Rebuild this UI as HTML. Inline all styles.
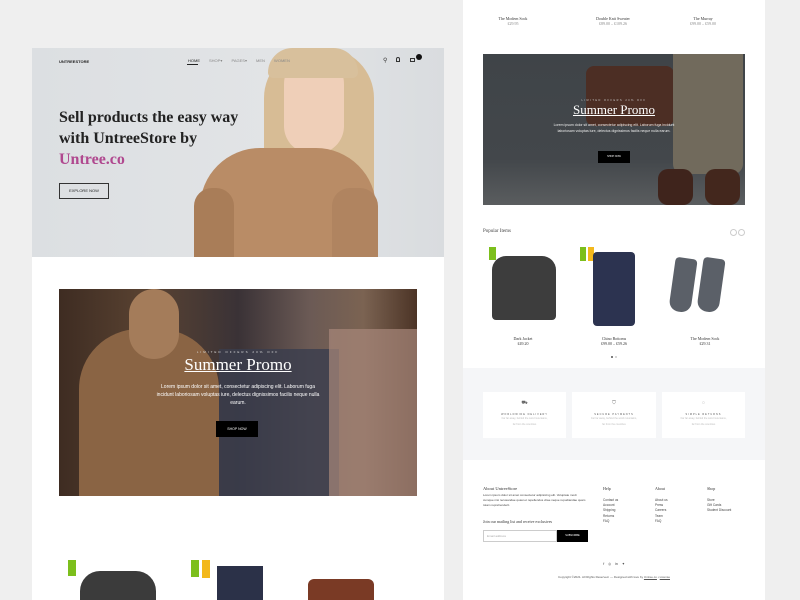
<!DOCTYPE html>
<html><head><meta charset="utf-8"><style>
*{margin:0;padding:0;box-sizing:border-box}
body{width:800px;height:600px;background:#efefef;position:relative;overflow:hidden;font-family:"Liberation Sans",sans-serif}
.a{position:absolute}
.serif{font-family:"Liberation Serif",serif}
.t{font-size:4px;color:#333}
</style></head><body>
<!-- LEFT PANEL -->
<div class="a" style="left:32px;top:48px;width:412px;height:552px;background:#fff"></div>
<div class="a" style="left:32px;top:48px;width:412px;height:209px;background:linear-gradient(90deg,#dcdfe2,#e2e4e6 60%,#d9dcdf);overflow:hidden">
  <!-- woman -->
  <div class="a" style="left:232px;top:0;width:110px;height:180px;border-radius:50px 50px 20px 20px;background:#d7bc95"></div>
  <div class="a" style="left:252px;top:6px;width:60px;height:100px;border-radius:30px 30px 28px 28px;background:#efcfb8"></div>
  <div class="a" style="left:236px;top:0;width:90px;height:30px;border-radius:45px 45px 10px 10px;background:#d8c09c"></div>
  <div class="a" style="left:168px;top:100px;width:176px;height:130px;border-radius:60px 60px 0 0;background:#b98c66"></div>
  <div class="a" style="left:162px;top:140px;width:40px;height:90px;border-radius:18px;background:#a97d58"></div>
  <div class="a" style="left:300px;top:140px;width:46px;height:90px;border-radius:18px;background:#b08460"></div>
</div>
<div class="a" style="left:59px;top:59px;font-size:4px;font-weight:bold;color:#222">UNTREESTORE</div>
<div class="a" style="left:188px;top:58px;font-size:4px;color:#222">HOME</div>
<div class="a" style="left:187px;top:64px;width:11px;height:1px;background:#222"></div>
<div class="a" style="left:209px;top:58px;font-size:4px;color:#888;word-spacing:8px">SHOP▾ PAGES▾ MEN WOMEN</div>
<div class="a" style="left:383px;top:57px;font-size:6px;color:#333">⚲</div>
<div class="a" style="left:396px;top:57px;width:4px;height:5px;border:1px solid #333;border-radius:2px 2px 0 0"></div>
<div class="a" style="left:410px;top:58px;width:5px;height:4px;border:1px solid #333"></div>
<div class="a" style="left:416px;top:54px;width:6px;height:6px;border-radius:50%;background:#111"></div>
<div class="a serif" style="left:59px;top:107px;font-size:16px;line-height:21px;font-weight:bold;color:#222">Sell products the easy way<br>with UntreeStore by<br><span style="color:#b0488f">Untree.co</span></div>
<div class="a" style="left:59px;top:183px;width:50px;height:16px;border:1px solid #333;font-size:4px;line-height:14px;text-align:center;color:#222">EXPLORE NOW</div>
<!-- promo left -->
<div class="a" style="left:59px;top:289px;width:358px;height:207px;overflow:hidden;background:linear-gradient(90deg,#3e2c22 0%,#5a4332 25%,#3a3236 50%,#6b5a55 70%,#7b6352 85%,#4c3426 100%)">
  <div class="a" style="left:20px;top:40px;width:140px;height:170px;border-radius:60px 60px 0 0;background:#8a6444"></div>
  <div class="a" style="left:70px;top:0;width:50px;height:70px;border-radius:25px;background:#a47c5a"></div>
  <div class="a" style="left:160px;top:60px;width:120px;height:150px;background:#3a3d4e;opacity:.8"></div>
  <div class="a" style="left:270px;top:40px;width:88px;height:170px;background:#a8887a;opacity:.7"></div>
</div>
<div class="a" style="left:59px;top:350px;width:358px;text-align:center;font-size:3px;letter-spacing:2px;color:#ddd">LIMITED OFFERS 20% OFF</div>
<div class="a serif" style="left:59px;top:355px;width:358px;text-align:center;font-size:17px;color:#fff;text-decoration:underline">Summer Promo</div>
<div class="a" style="left:155px;top:383px;width:166px;text-align:center;font-size:5px;line-height:8px;color:#fff">Lorem ipsum dolor sit amet, consectetur adipiscing elit. Laborum fuga incidunt laboriosam voluptas iure, delectus dignissimos facilis neque nulla earum.</div>
<div class="a" style="left:216px;top:421px;width:42px;height:16px;background:#000;color:#fff;font-size:3.5px;line-height:16px;text-align:center">SHOP NOW</div>
<!-- bottom products left -->
<div class="a" style="left:68px;top:560px;width:8px;height:16px;background:#7cbf1c"></div>
<div class="a" style="left:191px;top:560px;width:8px;height:17px;background:#7cbf1c"></div>
<div class="a" style="left:202px;top:560px;width:8px;height:18px;background:#f3b81c"></div>
<div class="a" style="left:80px;top:571px;width:76px;height:29px;border-radius:20px 20px 0 0;background:#3b3b3b"></div>
<div class="a" style="left:217px;top:566px;width:46px;height:34px;background:#2b3148"></div>
<div class="a" style="left:308px;top:579px;width:66px;height:21px;border-radius:6px 6px 0 0;background:#7a3a25"></div>
<!-- RIGHT PANEL -->
<div class="a" style="left:463px;top:0;width:302px;height:600px;background:#fff"></div>
<div class="a serif t" style="left:463px;top:16px;width:100px;text-align:center">The Modern Sock<br><span style="color:#888">£29.95</span></div>
<div class="a serif t" style="left:563px;top:16px;width:100px;text-align:center">Double Knit Sweater<br><span style="color:#888">£89.00 – £109.26</span></div>
<div class="a serif t" style="left:653px;top:16px;width:100px;text-align:center">The Murray<br><span style="color:#888">£99.00 – £59.00</span></div>
<div class="a" style="left:483px;top:54px;width:262px;height:151px;overflow:hidden;background:linear-gradient(180deg,#3f4448 0%,#43474b 70%,#5a5d5f 100%)">
  <div class="a" style="left:103px;top:12px;width:88px;height:60px;border-radius:8px;background:#4c2e24"></div>
  <div class="a" style="left:190px;top:0;width:70px;height:120px;background:#716a5c;border-radius:0 0 10px 10px"></div>
  <div class="a" style="left:175px;top:115px;width:35px;height:36px;background:#3f241c;border-radius:10px"></div>
  <div class="a" style="left:222px;top:115px;width:35px;height:36px;background:#43271d;border-radius:10px"></div>
</div>
<div class="a" style="left:483px;top:99px;width:262px;text-align:center;font-size:2.5px;letter-spacing:1.5px;color:#ccc">LIMITED OFFERS 20% OFF</div>
<div class="a serif" style="left:483px;top:102px;width:262px;text-align:center;font-size:13px;color:#fff;text-decoration:underline">Summer Promo</div>
<div class="a" style="left:553px;top:123px;width:122px;text-align:center;font-size:3.5px;line-height:5.5px;color:#eee">Lorem ipsum dolor sit amet, consectetur adipiscing elit. Laborum fuga incidunt laboriosam voluptas iure, delectus dignissimos facilis neque nulla earum.</div>
<div class="a" style="left:598px;top:151px;width:32px;height:12px;background:#000;color:#fff;font-size:2.5px;line-height:12px;text-align:center">SHOP NOW</div>
<div class="a serif" style="left:483px;top:229px;font-size:5px;color:#444">Popular Items</div>
<div class="a" style="left:730px;top:229px;width:7px;height:7px;border:1px solid #ccc;border-radius:50%"></div>
<div class="a" style="left:738px;top:229px;width:7px;height:7px;border:1px solid #ccc;border-radius:50%"></div>
<div class="a" style="left:489px;top:247px;width:7px;height:13px;background:#7cbf1c"></div>
<div class="a" style="left:580px;top:247px;width:6px;height:14px;background:#7cbf1c"></div>
<div class="a" style="left:588px;top:247px;width:6px;height:14px;background:#f3b81c"></div>
<div class="a" style="left:492px;top:256px;width:64px;height:64px;border-radius:14px 14px 4px 4px;background:#3d3d3d"></div>
<div class="a" style="left:593px;top:252px;width:42px;height:74px;border-radius:4px;background:#2c3350"></div>
<div class="a" style="left:672px;top:258px;width:22px;height:54px;border-radius:4px 4px 10px 10px;background:#5b6068;transform:rotate(8deg)"></div>
<div class="a" style="left:700px;top:258px;width:22px;height:54px;border-radius:4px 4px 10px 10px;background:#5b6068;transform:rotate(8deg)"></div>
<div class="a serif t" style="left:473px;top:336px;width:100px;text-align:center">Dark Jacket<br>£49.20</div>
<div class="a serif t" style="left:564px;top:336px;width:100px;text-align:center">Chino Bottoms<br>£99.00 – £59.26</div>
<div class="a serif t" style="left:655px;top:336px;width:100px;text-align:center">The Modern Sock<br>£29.31</div>
<div class="a" style="left:611px;top:356px;width:2px;height:2px;border-radius:50%;background:#555"></div>
<div class="a" style="left:615px;top:356px;width:2px;height:2px;border-radius:50%;background:#ccc"></div>
<!-- features -->
<div class="a" style="left:463px;top:368px;width:302px;height:92px;background:#f5f6f8"></div>
<div class="a" style="left:483px;top:392px;width:83px;height:46px;background:#fff"></div>
<div class="a" style="left:572px;top:392px;width:84px;height:46px;background:#fff"></div>
<div class="a" style="left:662px;top:392px;width:83px;height:46px;background:#fff"></div>
<div class="a" style="left:483px;top:400px;width:83px;text-align:center;font-size:5px;color:#666">⛟</div>
<div class="a" style="left:572px;top:400px;width:84px;text-align:center;font-size:5px;color:#666">⛉</div>
<div class="a" style="left:662px;top:400px;width:83px;text-align:center;font-size:5px;color:#666">◌</div>
<div class="a" style="left:483px;top:413px;width:83px;text-align:center;font-size:2.5px;letter-spacing:1px;color:#555">WORLDWIDE DELIVERY<br><span style="color:#bbb;letter-spacing:0;line-height:6px">Far far away, behind the word mountains,<br>far from the countries</span></div>
<div class="a" style="left:572px;top:413px;width:84px;text-align:center;font-size:2.5px;letter-spacing:1px;color:#555">SECURE PAYMENTS<br><span style="color:#bbb;letter-spacing:0;line-height:6px">Far far away, behind the word mountains,<br>far from the countries</span></div>
<div class="a" style="left:662px;top:413px;width:83px;text-align:center;font-size:2.5px;letter-spacing:1px;color:#555">SIMPLE RETURNS<br><span style="color:#bbb;letter-spacing:0;line-height:6px">Far far away, behind the word mountains,<br>far from the countries</span></div>
<!-- footer -->
<div class="a serif" style="left:483px;top:486px;font-size:4.5px;color:#333">About UntreeStore</div>
<div class="a" style="left:483px;top:493px;width:105px;font-size:3px;line-height:5px;color:#444">Lorem ipsum dolor sit amet consectetur adipisicing elit. Voluptate modi cumque nisi recusandae quasi et repellendus vitae neque repudiandae quam totam reprehenderit.</div>
<div class="a serif" style="left:483px;top:519px;font-size:4px;color:#333">Join our mailing list and receive exclusives</div>
<div class="a" style="left:483px;top:530px;width:74px;height:12px;border:1px solid #ccc;font-size:3px;line-height:10px;padding-left:3px;color:#aaa">Email address</div>
<div class="a" style="left:557px;top:530px;width:31px;height:12px;background:#000;color:#fff;font-size:2.5px;line-height:12px;text-align:center">SUBSCRIBE</div>
<div class="a serif" style="left:603px;top:486px;font-size:4px;color:#333">Help</div>
<div class="a" style="left:603px;top:498px;font-size:3.2px;line-height:5.2px;color:#444">Contact us<br>Account<br>Shipping<br>Returns<br>FAQ</div>
<div class="a serif" style="left:655px;top:486px;font-size:4px;color:#333">About</div>
<div class="a" style="left:655px;top:498px;font-size:3.2px;line-height:5.2px;color:#444">About us<br>Press<br>Careers<br>Team<br>FAQ</div>
<div class="a serif" style="left:707px;top:486px;font-size:4px;color:#333">Shop</div>
<div class="a" style="left:707px;top:498px;font-size:3.2px;line-height:5.2px;color:#444">Store<br>Gift Cards<br>Student Discount</div>
<div class="a" style="left:463px;top:562px;width:302px;text-align:center;font-size:3.5px;color:#333;word-spacing:3px">f ◎ in ✦</div>
<div class="a" style="left:463px;top:575px;width:302px;text-align:center;font-size:3px;color:#555">Copyright ©2021. All Rights Reserved. — Designed with love by <u>Untree.co</u> • <u>License</u></div>
</body></html>
